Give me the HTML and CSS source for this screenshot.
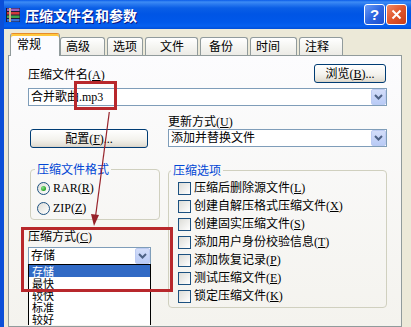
FILE: index.html
```html
<!DOCTYPE html>
<html lang="zh-CN">
<head>
    <meta charset="UTF-8">
    <meta name="viewport" content="width=device-width, initial-scale=1.0">
    <title>压缩文件名和参数</title>
    <link rel="stylesheet" href="styles.css">
</head>
<body>
<div class="window">
    <div class="titlebar">
        <svg class="app-icon" width="16" height="16" viewBox="0 0 16 16">
            <rect x="1" y="1" width="14" height="14" fill="#1a1a3a"/>
            <rect x="2" y="1.5" width="12.5" height="2.5" fill="#9a5cc0"/>
            <rect x="2" y="5" width="12.5" height="2.5" fill="#d0383a"/>
            <rect x="2" y="8.5" width="12.5" height="2.5" fill="#3ea34a"/>
            <rect x="2" y="12" width="12.5" height="2.5" fill="#3a6fd6"/>
            <rect x="4" y="1" width="2" height="14" fill="#c9b48a"/>
        </svg>
        <span class="title">压缩文件名和参数</span>
        <div class="caption-buttons">
            <span class="cap-btn help">?</span>
            <span class="cap-btn close">
                <svg width="11" height="11" viewBox="0 0 11 11"><path d="M1.5 1.5l8 8M9.5 1.5l-8 8" stroke="#fff" stroke-width="2"/></svg>
            </span>
        </div>
    </div>
    <div class="client">
        <div class="tabs">
            <div class="tab tab-general active">常规</div>
            <div class="tab tab-advanced">高级</div>
            <div class="tab tab-options">选项</div>
            <div class="tab tab-files">文件</div>
            <div class="tab tab-backup">备份</div>
            <div class="tab tab-time">时间</div>
            <div class="tab tab-comment">注释</div>
        </div>
        <div class="page">
            <div class="archive-row">
                <label class="field-label">压缩文件名(<u>A</u>)</label>
                <button class="btn browse">浏览(<u>B</u>)...</button>
            </div>
            <div class="combo archive-combo">
                <span class="combo-text">合并歌曲.mp3</span>
                <span class="drop-btn"><svg width="9" height="6" viewBox="0 0 9 6"><path d="M1 1l3.5 3.5L8 1" fill="none" stroke="#4d6185" stroke-width="2"/></svg></span>
            </div>
            <div class="columns">
                <div class="col">
                    <button class="btn profiles">配置(<u>F</u>)...</button>
                    <fieldset class="group format-group">
                        <legend>压缩文件格式</legend>
                        <div class="choice"><span class="radio checked"></span>RAR(<u>R</u>)</div>
                        <div class="choice"><span class="radio"></span>ZIP(<u>Z</u>)</div>
                    </fieldset>
                    <label class="field-label method-label">压缩方式(<u>C</u>)</label>
                    <div class="combo method-combo">
                        <span class="combo-text">存储</span>
                        <span class="drop-btn"><svg width="9" height="6" viewBox="0 0 9 6"><path d="M1 1l3.5 3.5L8 1" fill="none" stroke="#4d6185" stroke-width="2"/></svg></span>
                        <ul class="drop-list">
                            <li class="selected">存储</li>
                            <li>最快</li>
                            <li>较快</li>
                            <li>标准</li>
                            <li>较好</li>
                        </ul>
                    </div>
                </div>
                <div class="col">
                    <label class="field-label update-label">更新方式(<u>U</u>)</label>
                    <div class="combo update-combo">
                        <span class="combo-text">添加并替换文件</span>
                        <span class="drop-btn"><svg width="9" height="6" viewBox="0 0 9 6"><path d="M1 1l3.5 3.5L8 1" fill="none" stroke="#4d6185" stroke-width="2"/></svg></span>
                    </div>
                    <fieldset class="group options-group">
                        <legend>压缩选项</legend>
                        <div class="choice"><span class="check"></span>压缩后删除源文件(<u>L</u>)</div>
                        <div class="choice"><span class="check"></span>创建自解压格式压缩文件(<u>X</u>)</div>
                        <div class="choice"><span class="check"></span>创建固实压缩文件(<u>S</u>)</div>
                        <div class="choice"><span class="check"></span>添加用户身份校验信息(<u>T</u>)</div>
                        <div class="choice"><span class="check"></span>添加恢复记录(<u>P</u>)</div>
                        <div class="choice"><span class="check"></span>测试压缩文件(<u>E</u>)</div>
                        <div class="choice"><span class="check"></span>锁定压缩文件(<u>K</u>)</div>
                    </fieldset>
                </div>
            </div>
        </div>
    </div>
</div>

<!-- red annotation marks drawn over the dialog -->
<div class="mark mark-name"></div>
<div class="mark mark-method"></div>
<svg class="arrow" width="411" height="327" viewBox="0 0 411 327">
    <line x1="109.3" y1="112" x2="95.6" y2="216" stroke="#97222a" stroke-width="1.2"/>
    <polygon points="91,214 99,215 94,226" fill="#97222a"/>
</svg>
</body>
</html>
```

FILE: styles.css
```css
body {
    margin: 0;
    width: 411px;
    height: 327px;
    overflow: hidden;
    position: relative;
    background-color: #ece9d8;
    font: 12px/14px "Liberation Serif", "Noto Sans CJK SC", serif;
    color: #000;
}

.window {
    height: 327px;
    display: flex;
    flex-direction: column;
    border-left: 4px solid #0b4fd8;
    box-sizing: border-box;
}

/* title bar */
.titlebar {
    height: 29px;
    flex: none;
    display: flex;
    align-items: center;
    padding: 0 4px 0 1px;
    background: linear-gradient(180deg, #0a5be8 0, #3d8cf5 2px, #2b7bf0 4px, #0a5ee6 8px, #0055e5 14px, #0058ea 22px, #0660f0 26px, #004ed8 29px);
}

.app-icon {
    flex: none;
    margin-top: 1px;
}

.title {
    margin-left: 4px;
    color: #fff;
    font: bold 14px/16px "Noto Sans CJK SC", sans-serif;
    text-shadow: 1px 1px #0a1883;
}

.caption-buttons {
    margin-left: auto;
    display: flex;
    gap: 1px;
}

.cap-btn {
    width: 21px;
    height: 21px;
    box-sizing: border-box;
    border: 1px solid #fff;
    border-radius: 3px;
    display: flex;
    align-items: center;
    justify-content: center;
    color: #fff;
    font: bold 15px/1 "Liberation Sans", sans-serif;
}

.help {
    background: linear-gradient(135deg, #6b9cf7 0, #2d66e0 50%, #1b4fcf 100%);
}

.close {
    background: linear-gradient(135deg, #f08a66 0, #e0552b 50%, #c83d1a 100%);
}

/* tabs */
.client {
    flex: 1;
    display: flex;
    flex-direction: column;
    padding: 4px 9px 0 4px;
    min-height: 0;
}

.tabs {
    height: 22px;
    flex: none;
    display: flex;
    align-items: flex-start;
    padding-left: 2px;
}

.tab {
    height: 18px;
    box-sizing: border-box;
    margin: 4px 0 0 2px;
    padding-left: 5px;
    border: 1px solid #919b9c;
    border-bottom: none;
    border-radius: 3px 3px 0 0;
    background: linear-gradient(#ffffff, #f3f3ef 60%, #ecebe6);
    line-height: 16px;
    font-family: "Noto Sans CJK SC", sans-serif;
    white-space: nowrap;
}

.tab.active {
    position: relative;
    z-index: 2;
    height: 23px;
    margin: 0;
    padding-left: 6px;
    border-top-color: #e68b2c;
    box-shadow: inset 0 2px #ffc83c;
    background: #fcfcfe;
    line-height: 20px;
}

.tab-general { width: 50px; }
.tab-advanced { width: 45px; margin-left: 0; }
.tab-options { width: 36px; }
.tab-files { width: 53px; padding-left: 14px; }
.tab-backup { width: 48px; padding-left: 8px; }
.tab-time { width: 47px; }
.tab-comment { width: 44px; }

/* tab page */
.page {
    flex: 1;
    border: 1px solid #919b9c;
    background: linear-gradient(#fcfcfe, #f4f3ee);
    padding: 8px 14px 0 19px;
}

.field-label {
    display: block;
    white-space: nowrap;
}

.archive-row {
    display: flex;
    justify-content: space-between;
    align-items: flex-end;
    height: 19px;
}

.archive-row .field-label {
    margin-bottom: 1px;
}

.btn {
    height: 19px;
    box-sizing: border-box;
    padding: 0;
    border: 1px solid #003c74;
    border-radius: 3px;
    background: linear-gradient(#ffffff, #f4f3ee 55%, #e3e0d6 90%, #d6d0c5);
    font: inherit;
    color: #000;
}

.browse {
    width: 72px;
    margin-right: 1px;
}

.combo {
    position: relative;
    height: 18px;
    box-sizing: border-box;
    border: 1px solid #7f9db9;
    background: #fff;
    display: flex;
    align-items: center;
    padding-left: 2px;
}

.combo-text {
    white-space: nowrap;
}

.drop-btn {
    margin-left: auto;
    width: 15px;
    height: 16px;
    box-sizing: border-box;
    border: 1px solid #bccbf2;
    border-radius: 2px;
    background: linear-gradient(#d3ddf9, #b9cbf6);
    display: flex;
    align-items: center;
    justify-content: center;
}

.archive-combo {
    margin-top: 5px;
}

.columns {
    display: grid;
    grid-template-columns: 132px 219px;
    column-gap: 8px;
    align-items: start;
}

.col {
    display: flex;
    flex-direction: column;
    align-items: flex-start;
}

.profiles {
    width: 118px;
    margin: 23px 0 0 2px;
}

.group {
    margin: 0;
    min-width: 0;
    box-sizing: border-box;
    border: 1px solid #d0d0bf;
    border-radius: 4px;
}

.group legend {
    padding: 0 2px;
    color: #0046d5;
    line-height: 14px;
    font-family: "Noto Sans CJK SC", sans-serif;
}

.choice {
    display: flex;
    align-items: center;
    height: 14px;
    white-space: nowrap;
}

.format-group {
    width: 130px;
    margin: 14px 0 0 2px;
    padding: 5px 0 4px 6px;
}

.format-group legend {
    margin-left: -2px;
}

.format-group .choice + .choice {
    margin-top: 6px;
}

.radio {
    width: 13px;
    height: 13px;
    box-sizing: border-box;
    margin-right: 3px;
    border: 1px solid #1c5180;
    border-radius: 50%;
    background: linear-gradient(135deg, #dcdcd7, #ffffff);
    display: flex;
    align-items: center;
    justify-content: center;
}

.radio.checked::after {
    content: "";
    width: 5px;
    height: 5px;
    border-radius: 50%;
    background: radial-gradient(circle at 35% 35%, #8be08b, #21a121 70%);
}

.method-label {
    margin-top: 10px;
}

.method-combo {
    width: 123px;
    margin-top: 3px;
}

.drop-list {
    position: absolute;
    top: 100%;
    left: -1px;
    width: 123px;
    box-sizing: border-box;
    margin: 0;
    padding: 0;
    list-style: none;
    background: #fff;
    border: 1px solid #000;
    border-bottom: none;
    font: 11px/12px "Noto Sans CJK SC", sans-serif;
    z-index: 3;
}

.drop-list li {
    height: 12px;
    padding-left: 3px;
}

.drop-list .selected {
    background: #316ac5;
    color: #fff;
}

.update-label {
    margin-top: 9px;
}

.update-combo {
    width: 219px;
}

.options-group {
    width: 219px;
    margin-top: 16px;
    padding: 4px 0 4px 9px;
}

.options-group legend {
    margin-left: -7px;
}

.options-group .choice + .choice {
    margin-top: 4px;
}

.check {
    width: 13px;
    height: 13px;
    box-sizing: border-box;
    margin-right: 3px;
    border: 1px solid #1c5180;
    background: linear-gradient(135deg, #dcdcd7, #ffffff);
}

/* annotations */
.mark {
    position: absolute;
    box-sizing: border-box;
    border: 3px solid #b8282c;
    z-index: 5;
}

.mark-name {
    left: 74px;
    top: 81px;
    width: 43px;
    height: 29px;
}

.mark-method {
    left: 21px;
    top: 227px;
    width: 152px;
    height: 65px;
}

.arrow {
    position: absolute;
    left: 0;
    top: 0;
    z-index: 5;
    pointer-events: none;
}
```
